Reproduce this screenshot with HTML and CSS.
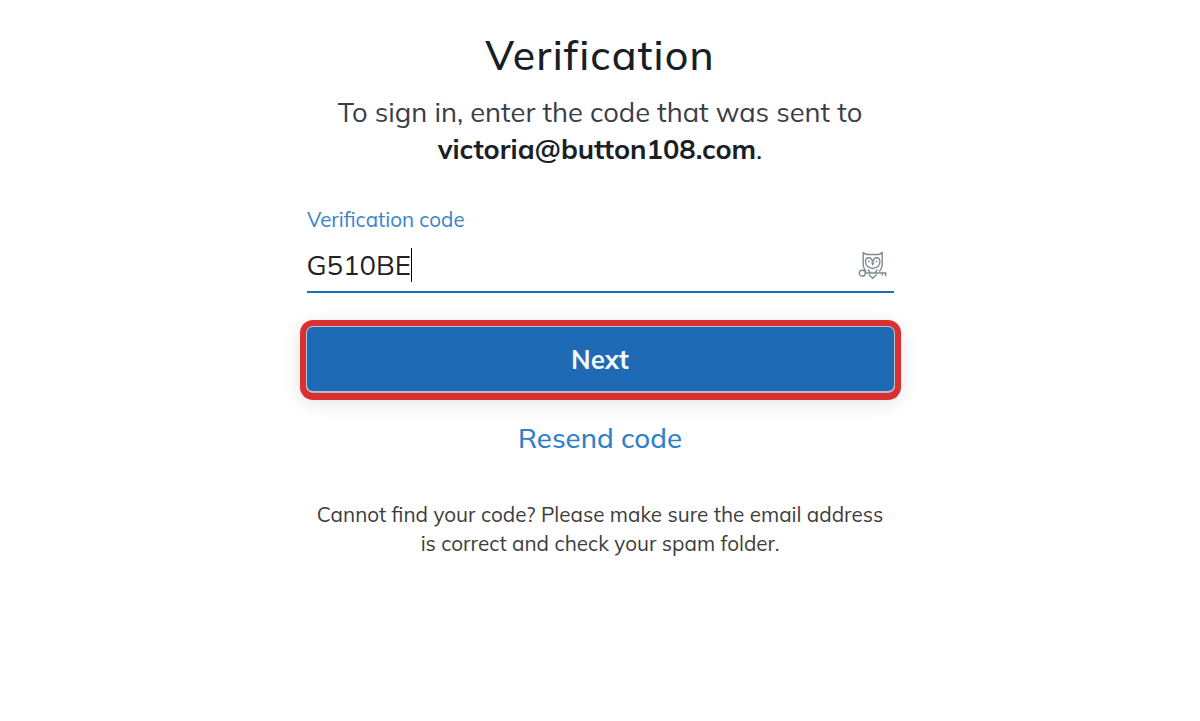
FILE: index.html
```html
<!DOCTYPE html>
<html lang="en">
<head>
  <meta charset="UTF-8">
  <meta name="viewport" content="width=device-width, initial-scale=1.0">
  <title>Verification</title>
  <link rel="stylesheet" href="styles.css">
</head>
<body>
  <main class="container">
    <h1>Verification</h1>
    <p class="intro">
      <span class="intro-text">To sign in, enter the code that was sent to</span><br>
      <strong>victoria@button108.com</strong>.
    </p>

    <form class="form">
      <div class="label">Verification code</div>
      <div class="field">
        <span class="code">G510BE</span>
        <span class="caret"></span>
        <svg class="owl" viewBox="0 0 30 30" width="30" height="30">
          <path d="M5.200 2c.8 1.900 2 2.500 4.500 2.500h10c2.500 0 3.700-.6 4.500-2.500v11.500c0 3.500-1 6-3 8M5.200 2v11.500c0 3.500 1 6 3 8"/>
          <path d="M14.700 18.500c-4.200-.8-7.200-3.200-7.200-6.700 0-2.500 1.200-4 3.200-4 2.200 0 3.400 1.800 4 4.200.6-2.400 1.800-4.200 4-4.200 2 0 3.200 1.500 3.200 4 0 3.500-3 5.900-7.200 6.700z"/>
          <path d="M13.600 12.300l1.100 2.200 1.100-2.200"/>
          <circle class="eye" cx="10.900" cy="11.300" r=".9"/>
          <circle class="eye" cx="18.500" cy="11.300" r=".9"/>
          <circle cx="4.300" cy="23.200" r="3"/>
          <path d="M7.300 23h20.300v3.200M24.400 23v2.500M10 19.500l2.300 3.300M19.400 19.500l-2.300 3.300M10.800 24.500l3.900 3.800 3.900-3.800"/>
        </svg>
      </div>
      <button class="button" type="button">Next</button>
    </form>

    <a class="resend">Resend code</a>
    <p class="note">
      Cannot find your code? Please make sure the email address<br>
      is correct and check your spam folder.
    </p>
  </main>
</body>
</html>
```

FILE: styles.css
```css
* {
  box-sizing: border-box;
}

body {
  font-family: Mulish, Muli, Lato, sans-serif;
  background-color: #fff;
  color: #1a1e27;
  margin: 0;
}

.container {
  width: 587px;
  margin: 0 auto;
  padding-top: 30px;
  display: flex;
  flex-direction: column;
  align-items: center;
  white-space: nowrap;
}

h1 {
  font-size: 41px;
  font-weight: 500;
  line-height: 50px;
  letter-spacing: 1.2px;
  margin: 0;
}

.intro {
  font-size: 27.3px;
  line-height: 37px;
  text-align: center;
  margin: 14px 0 0;
}

.intro-text {
  color: #3a3d46;
}

.intro strong {
  font-weight: 700;
}

.form {
  width: 100%;
  margin-top: 37px;
}

.label {
  font-size: 20.6px;
  line-height: 28px;
  padding-left: 0.5px;
  color: #3a83cb;
}

.field {
  display: flex;
  align-items: center;
  height: 60px;
  padding-top: 5px;
  padding-right: 6px;
  border-bottom: 2px solid #1a70bd;
}

.code {
  font-size: 27.5px;
  color: #222;
}

.caret {
  width: 1px;
  height: 34px;
  background-color: #000;
}

.owl {
  margin-left: auto;
  fill: none;
  stroke: #7f8b90;
  stroke-width: 1.4;
}

.eye {
  fill: #7f8b90;
  stroke: none;
}

.button {
  display: block;
  width: 100%;
  height: 64px;
  margin-top: 34px;
  border: none;
  border-radius: 6px;
  background-color: #1e6ab5;
  color: #f3f7fc;
  font-family: inherit;
  font-size: 26px;
  font-weight: 700;
  box-shadow:
    0 0 0 1px #b9c4d2,
    0 1px 0 1px #b5b8bd,
    0 0 0 7px #db3030,
    0 2px 0 7px #db3030,
    0 5px 18px 8px rgba(0, 0, 0, 0.1);
}

.resend {
  margin-top: 29px;
  font-size: 27.6px;
  font-weight: 500;
  line-height: 36px;
  color: #2f7fca;
}

.note {
  font-size: 20.7px;
  line-height: 29px;
  text-align: center;
  color: #3d3d3d;
  margin: 44px 0 0;
}
```
